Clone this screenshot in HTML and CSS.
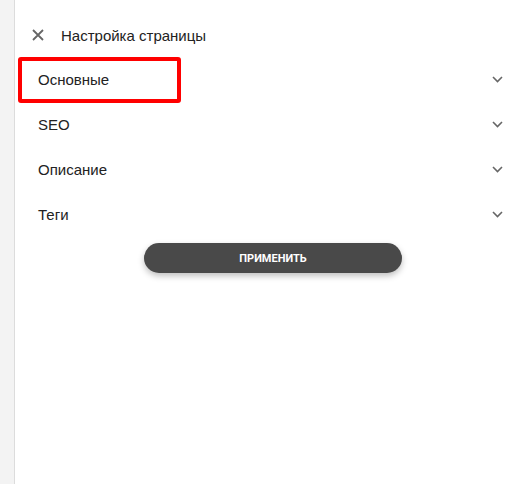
FILE: index.html
```html
<!DOCTYPE html>
<html>

<head>
    <title>Настройка страницы</title>
    <link rel="stylesheet" href="styles.css">
</head>

<body>
    <div class="layout">
        <div class="side-strip"></div>

        <div class="settings-panel">
            <div class="panel-header">
                <span class="close-icon">
                    <svg width="12" height="12" viewBox="0 0 12 12">
                        <path d="M1 1L11 11M11 1L1 11" stroke="#666" stroke-width="1.8" fill="none"/>
                    </svg>
                </span>
                <span class="panel-title">Настройка страницы</span>
            </div>

            <div class="section-row">
                <span class="row-highlight"></span>
                <span class="row-label">Основные</span>
                <svg class="chevron" width="11" height="7" viewBox="0 0 11 7">
                    <path d="M1 1L5.5 5.5L10 1" stroke="#666" stroke-width="1.6" fill="none"/>
                </svg>
            </div>
            <div class="section-row">
                <span class="row-label">SEO</span>
                <svg class="chevron" width="11" height="7" viewBox="0 0 11 7">
                    <path d="M1 1L5.5 5.5L10 1" stroke="#666" stroke-width="1.6" fill="none"/>
                </svg>
            </div>
            <div class="section-row">
                <span class="row-label">Описание</span>
                <svg class="chevron" width="11" height="7" viewBox="0 0 11 7">
                    <path d="M1 1L5.5 5.5L10 1" stroke="#666" stroke-width="1.6" fill="none"/>
                </svg>
            </div>
            <div class="section-row">
                <span class="row-label">Теги</span>
                <svg class="chevron" width="11" height="7" viewBox="0 0 11 7">
                    <path d="M1 1L5.5 5.5L10 1" stroke="#666" stroke-width="1.6" fill="none"/>
                </svg>
            </div>

            <button class="apply-button">Применить</button>
        </div>
    </div>
</body>

</html>
```

FILE: styles.css
```css
body {
    margin: 0;
    background-color: white;
    font-family: "Liberation Sans", Arial, sans-serif;
}

.layout {
    display: flex;
    height: 484px;
}

.side-strip {
    width: 14px;
    background-color: #f3f3f3;
    border-right: 1px solid #dcdcdc;
}

.settings-panel {
    flex: 1;
    padding-top: 13px;
}

.panel-header {
    display: flex;
    align-items: center;
    height: 44px;
    padding-left: 17px;
}

.close-icon {
    display: flex;
    width: 12px;
    height: 12px;
    margin-right: 17px;
}

.panel-title {
    font-size: 15px;
    color: #222;
}

.section-row {
    position: relative;
    display: flex;
    align-items: center;
    justify-content: space-between;
    height: 45px;
    padding-left: 23px;
    padding-right: 21px;
}

.row-label {
    font-size: 15px;
    color: #222;
}

.row-highlight {
    position: absolute;
    left: 3px;
    top: 0;
    width: 155px;
    height: 38px;
    border: 4px solid #ff0000;
    border-radius: 3px;
}

.chevron {
    display: block;
}

.apply-button {
    display: block;
    width: 258px;
    height: 30px;
    margin: 6px 0 0 129px;
    background-color: #494949;
    color: white;
    border: none;
    border-radius: 15px;
    font-family: Roboto, sans-serif;
    font-weight: bold;
    font-size: 11px;
    text-transform: uppercase;
    box-shadow: 0 3px 6px rgba(0, 0, 0, 0.25);
    cursor: pointer;
}
```
